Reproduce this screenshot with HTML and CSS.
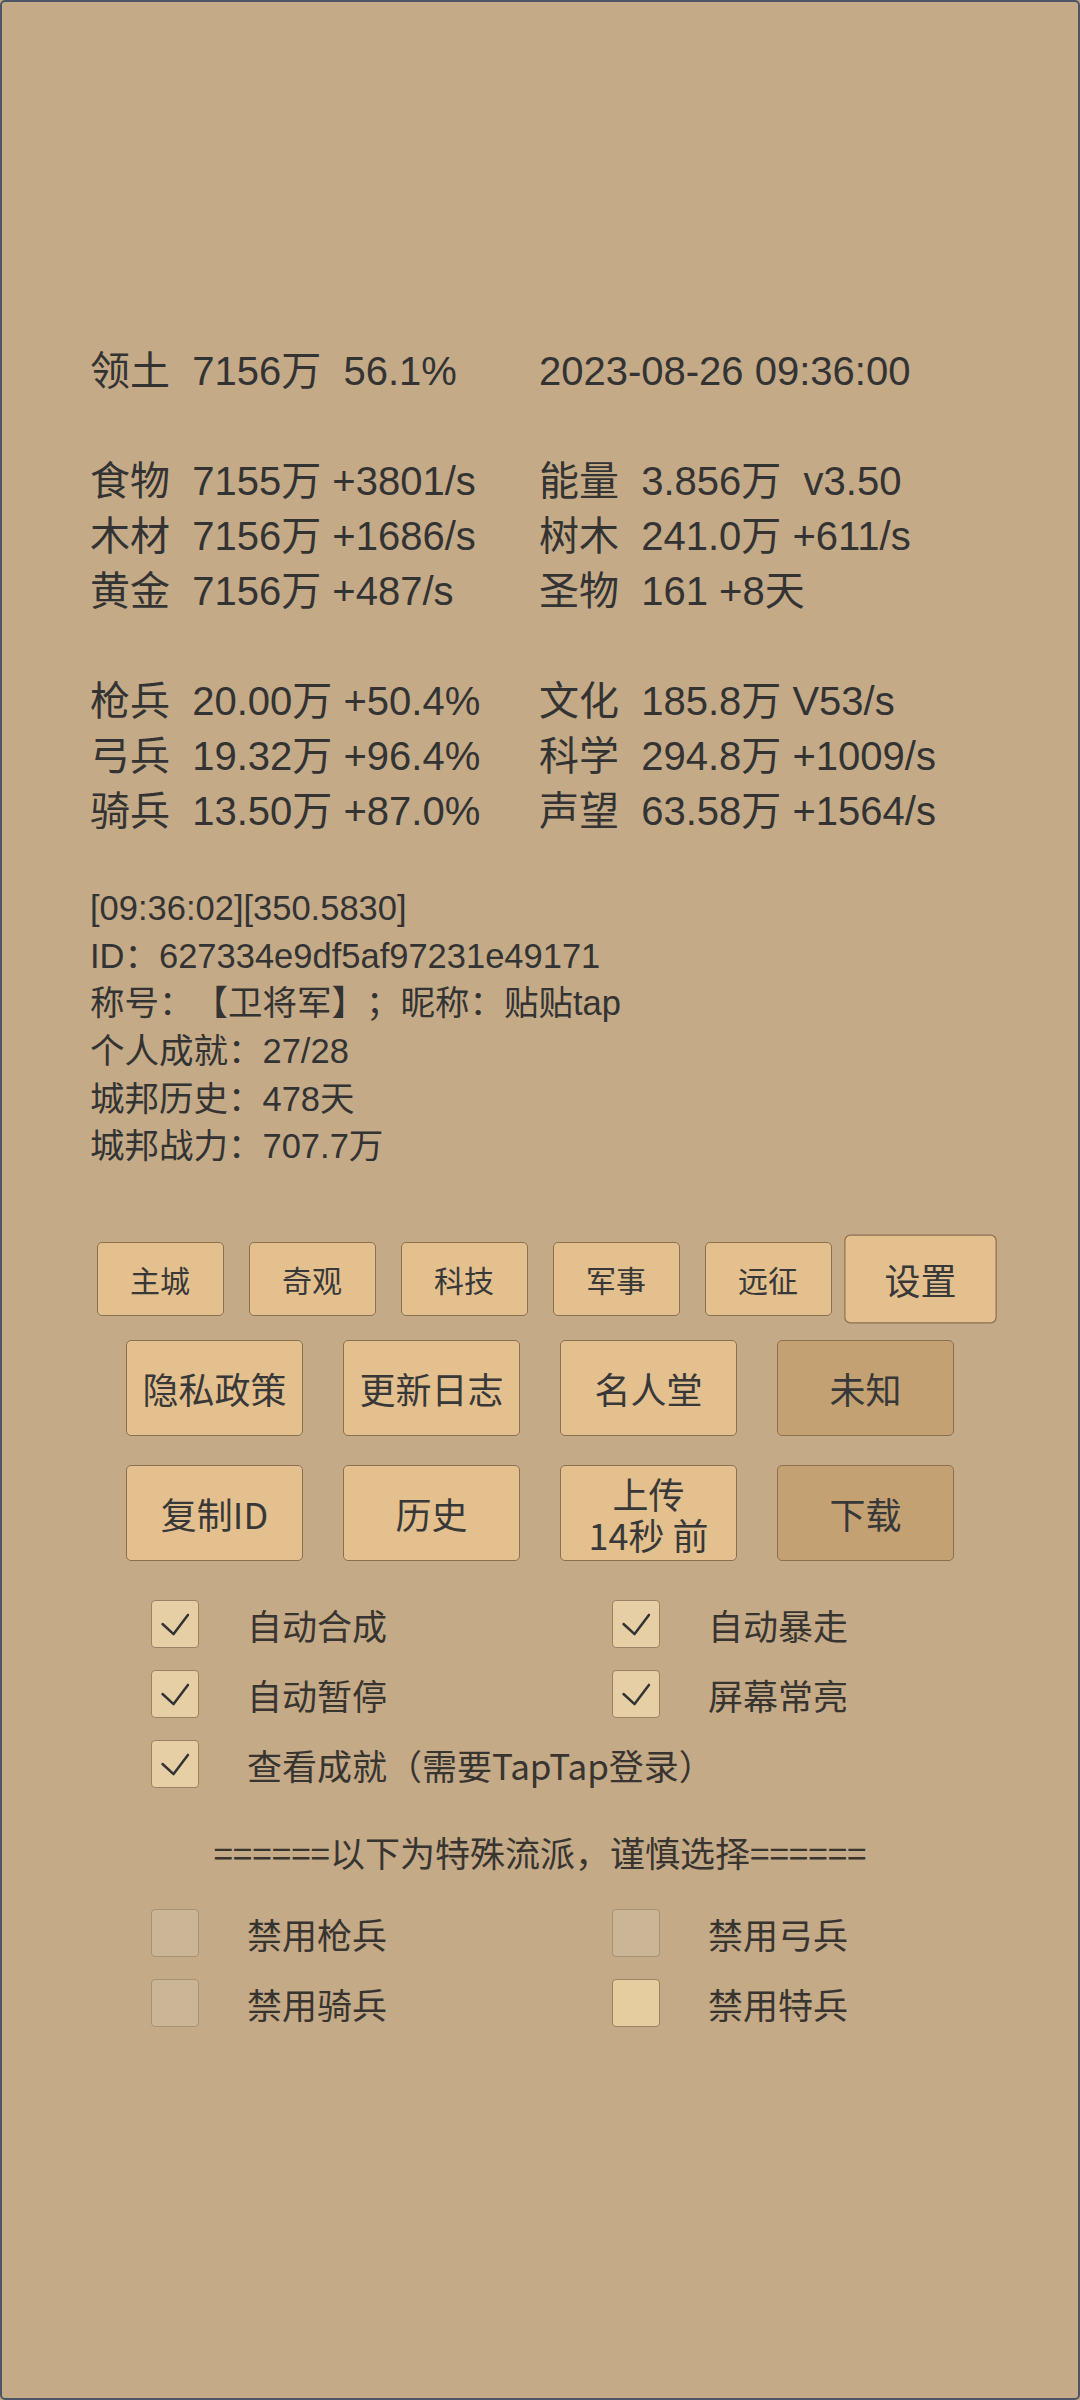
FILE: index.html
```html
<!DOCTYPE html>
<html lang="zh">
<head>
<meta charset="utf-8">
<title>城邦</title>
<link rel="stylesheet" href="styles.css">
</head>
<body>
<div class="frame">
  <div class="stats">
    <div class="cell">领土  7156万  56.1%</div><div class="cell">2023-08-26 09:36:00</div>
    <div class="cell"></div><div class="cell"></div>
    <div class="cell">食物  7155万 +3801/s</div><div class="cell">能量  3.856万  v3.50</div>
    <div class="cell">木材  7156万 +1686/s</div><div class="cell">树木  241.0万 +611/s</div>
    <div class="cell">黄金  7156万 +487/s</div><div class="cell">圣物  161 +8天</div>
    <div class="cell"></div><div class="cell"></div>
    <div class="cell">枪兵  20.00万 +50.4%</div><div class="cell">文化  185.8万 V53/s</div>
    <div class="cell">弓兵  19.32万 +96.4%</div><div class="cell">科学  294.8万 +1009/s</div>
    <div class="cell">骑兵  13.50万 +87.0%</div><div class="cell">声望  63.58万 +1564/s</div>
  </div>

  <div class="info">
    <div class="line">[09:36:02][350.5830]</div>
    <div class="line">ID：627334e9df5af97231e49171</div>
    <div class="line">称号：【卫将军】；昵称：贴贴tap</div>
    <div class="line">个人成就：27/28</div>
    <div class="line">城邦历史：478天</div>
    <div class="line">城邦战力：707.7万</div>
  </div>

  <div class="tabs">
    <div class="btn tab">主城</div>
    <div class="btn tab">奇观</div>
    <div class="btn tab">科技</div>
    <div class="btn tab">军事</div>
    <div class="btn tab">远征</div>
    <div class="btn tab active">设置</div>
  </div>

  <div class="actions row2">
    <div class="btn big">隐私政策</div>
    <div class="btn big">更新日志</div>
    <div class="btn big">名人堂</div>
    <div class="btn big dim">未知</div>
  </div>

  <div class="actions row3">
    <div class="btn big">复制ID</div>
    <div class="btn big">历史</div>
    <div class="btn big two">上传<br>14秒 前</div>
    <div class="btn big dim">下载</div>
  </div>

  <div class="checks">
    <div class="opt"><span class="box on"><svg viewBox="0 0 48 48"><polyline points="11,24 22.5,34.5 37.5,14.5"/></svg></span><span class="lbl">自动合成</span></div>
    <div class="opt"><span class="box on"><svg viewBox="0 0 48 48"><polyline points="11,24 22.5,34.5 37.5,14.5"/></svg></span><span class="lbl">自动暴走</span></div>
    <div class="opt"><span class="box on"><svg viewBox="0 0 48 48"><polyline points="11,24 22.5,34.5 37.5,14.5"/></svg></span><span class="lbl">自动暂停</span></div>
    <div class="opt"><span class="box on"><svg viewBox="0 0 48 48"><polyline points="11,24 22.5,34.5 37.5,14.5"/></svg></span><span class="lbl">屏幕常亮</span></div>
    <div class="opt wide"><span class="box on"><svg viewBox="0 0 48 48"><polyline points="11,24 22.5,34.5 37.5,14.5"/></svg></span><span class="lbl">查看成就（需要TapTap登录）</span></div>
  </div>

  <div class="sep">======以下为特殊流派，谨慎选择======</div>

  <div class="checks bans">
    <div class="opt"><span class="box off"></span><span class="lbl">禁用枪兵</span></div>
    <div class="opt"><span class="box off"></span><span class="lbl">禁用弓兵</span></div>
    <div class="opt"><span class="box off"></span><span class="lbl">禁用骑兵</span></div>
    <div class="opt"><span class="box lit"></span><span class="lbl">禁用特兵</span></div>
  </div>
</div>
</body>
</html>
```

FILE: styles.css
```css
html, body {
  margin: 0;
  padding: 0;
  background: #c4aa87;
}

.frame {
  box-sizing: border-box;
  width: 1080px;
  height: 2400px;
  border: 2px solid #4d5466;
  border-radius: 5px;
  background: #c4aa87;
  color: #333333;
  font-family: "Liberation Sans", "Noto Sans CJK SC", sans-serif;
  overflow: hidden;
  text-spacing-trim: space-all;
}

.stats {
  display: grid;
  grid-template-columns: 449px 1fr;
  grid-auto-rows: 55px;
  padding: 342px 0 0 88px;
  font-size: 40px;
  line-height: 55px;
}

.cell {
  white-space: pre;
}

.info {
  margin-top: 46px;
  padding-left: 88px;
  font-size: 34.5px;
}

.line {
  height: 47.7px;
  line-height: 47.7px;
  white-space: pre;
}

.btn {
  box-sizing: border-box;
  display: flex;
  align-items: center;
  justify-content: center;
  text-align: center;
  background: #e3c08e;
  border: 1.5px solid #8b7050;
  border-radius: 5px;
  color: #383838;
  font-family: "Noto Sans CJK SC", sans-serif;
}

.tabs {
  display: flex;
  justify-content: center;
  gap: 25px;
  margin-top: 71px;
}

.tab {
  width: 127px;
  height: 74px;
  font-size: 30px;
}

.tab.active {
  transform: scale(1.2);
}

.actions {
  display: flex;
  justify-content: center;
  gap: 40px;
}

.row2 { margin-top: 24px; }
.row3 { margin-top: 29px; }

.big {
  width: 177px;
  height: 96px;
  font-size: 36px;
}

.big.two {
  line-height: 41px;
  padding-top: 2px;
}

.dim {
  background: #c4a173;
}

.checks {
  display: grid;
  grid-template-columns: 461px 1fr;
  row-gap: 22px;
  margin-top: 39px;
  padding-left: 149px;
}

.opt {
  display: flex;
  align-items: center;
  gap: 48px;
  height: 48px;
}

.opt.wide {
  grid-column: span 2;
}

.box {
  box-sizing: border-box;
  width: 48px;
  height: 48px;
  flex: none;
  border: 1.5px solid #9a8263;
  border-radius: 4px;
}

.box svg {
  display: block;
  width: 100%;
  height: 100%;
  fill: none;
  stroke: #333333;
  stroke-width: 2.6;
  stroke-linecap: round;
  stroke-linejoin: round;
}

.box.on { background: #e6cfa5; }
.box.off { background: #cab696; border-color: #a89274; }
.box.lit { background: #e6cda0; }

.lbl {
  font-family: "Noto Sans CJK SC", sans-serif;
  font-size: 35px;
  color: #383430;
  white-space: nowrap;
}

.sep {
  margin-top: 39px;
  height: 50px;
  line-height: 50px;
  text-align: center;
  font-family: "Noto Sans CJK SC", sans-serif;
  font-size: 35px;
  color: #383430;
}

.bans {
  margin-top: 32px;
}
```
